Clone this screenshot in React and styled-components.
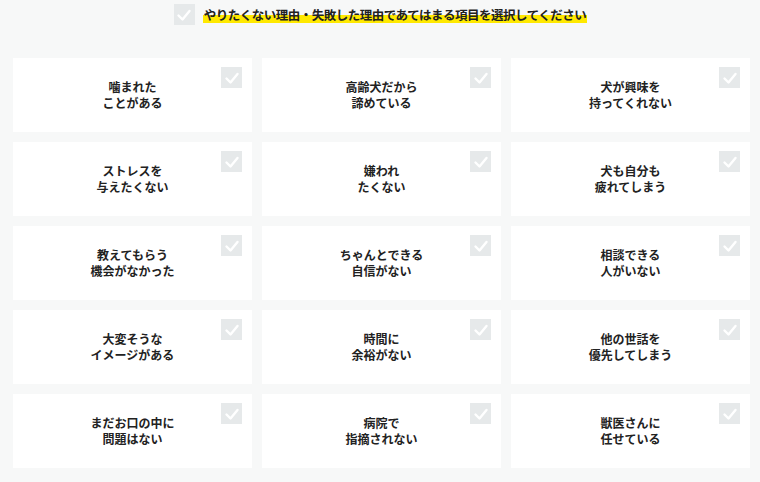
import React from 'react';
import styled, { createGlobalStyle } from 'styled-components';

const GlobalStyle = createGlobalStyle`
  body {
    margin: 0;
    background: #f7f8f8;
    font-family: "Noto Sans CJK JP", "Noto Sans", sans-serif;
    color: #222;
  }
`;

const Page = styled.div`
  width: 760px;
  height: 482px;
  padding-top: 4px;
  box-sizing: border-box;
`;

const Header = styled.div`
  display: flex;
  align-items: center;
  justify-content: center;
  gap: 8px;
  height: 21px;
  margin-left: 1px;
`;

const Box = styled.span`
  flex: none;
  width: ${p => p.size}px;
  height: ${p => p.size}px;
  background: #e6e9ea;
  display: flex;
  align-items: center;
  justify-content: center;
`;

const Lead = styled.h1`
  margin: 0;
  font-size: 12.5px;
  letter-spacing: -0.5px;
  font-weight: 700;
  line-height: 16px;
  padding: 0 1px;
  background: linear-gradient(transparent 48%, #ffe900 48%, #ffe900 100%);
`;

const Grid = styled.div`
  display: grid;
  grid-template-columns: repeat(3, 239px);
  column-gap: 10px;
  row-gap: 10px;
  padding: 33px 0 0 13px;
`;

const Card = styled.label`
  position: relative;
  height: 74px;
  background: #fff;
  display: flex;
  align-items: center;
  justify-content: center;
  text-align: center;
  font-size: 12px;
  font-weight: 700;
  line-height: 16.5px;
  cursor: pointer;
`;

const CardBox = styled(Box)`
  position: absolute;
  top: 9px;
  right: 10px;
`;

const Check = ({ size }) => (
  <svg width={size} height={size} viewBox="0 0 20 20">
    <polyline points="4.5,10.5 8.5,14.5 15.5,6" fill="none" stroke="#fff" strokeWidth="2.4" strokeLinecap="round" strokeLinejoin="round" />
  </svg>
);

const items = [
  ['噛まれた', 'ことがある'],
  ['高齢犬だから', '諦めている'],
  ['犬が興味を', '持ってくれない'],
  ['ストレスを', '与えたくない'],
  ['嫌われ', 'たくない'],
  ['犬も自分も', '疲れてしまう'],
  ['教えてもらう', '機会がなかった'],
  ['ちゃんとできる', '自信がない'],
  ['相談できる', '人がいない'],
  ['大変そうな', 'イメージがある'],
  ['時間に', '余裕がない'],
  ['他の世話を', '優先してしまう'],
  ['まだお口の中に', '問題はない'],
  ['病院で', '指摘されない'],
  ['獣医さんに', '任せている'],
];

export default function App() {
  return (
    <Page>
      <GlobalStyle />
      <Header>
        <Box size={21}><Check size={20} /></Box>
        <Lead>やりたくない理由・失敗した理由であてはまる項目を選択してください</Lead>
      </Header>
      <Grid>
        {items.map(([a, b], i) => (
          <Card key={i}>
            <span>{a}<br />{b}</span>
            <CardBox size={21}><Check size={20} /></CardBox>
          </Card>
        ))}
      </Grid>
    </Page>
  );
}
